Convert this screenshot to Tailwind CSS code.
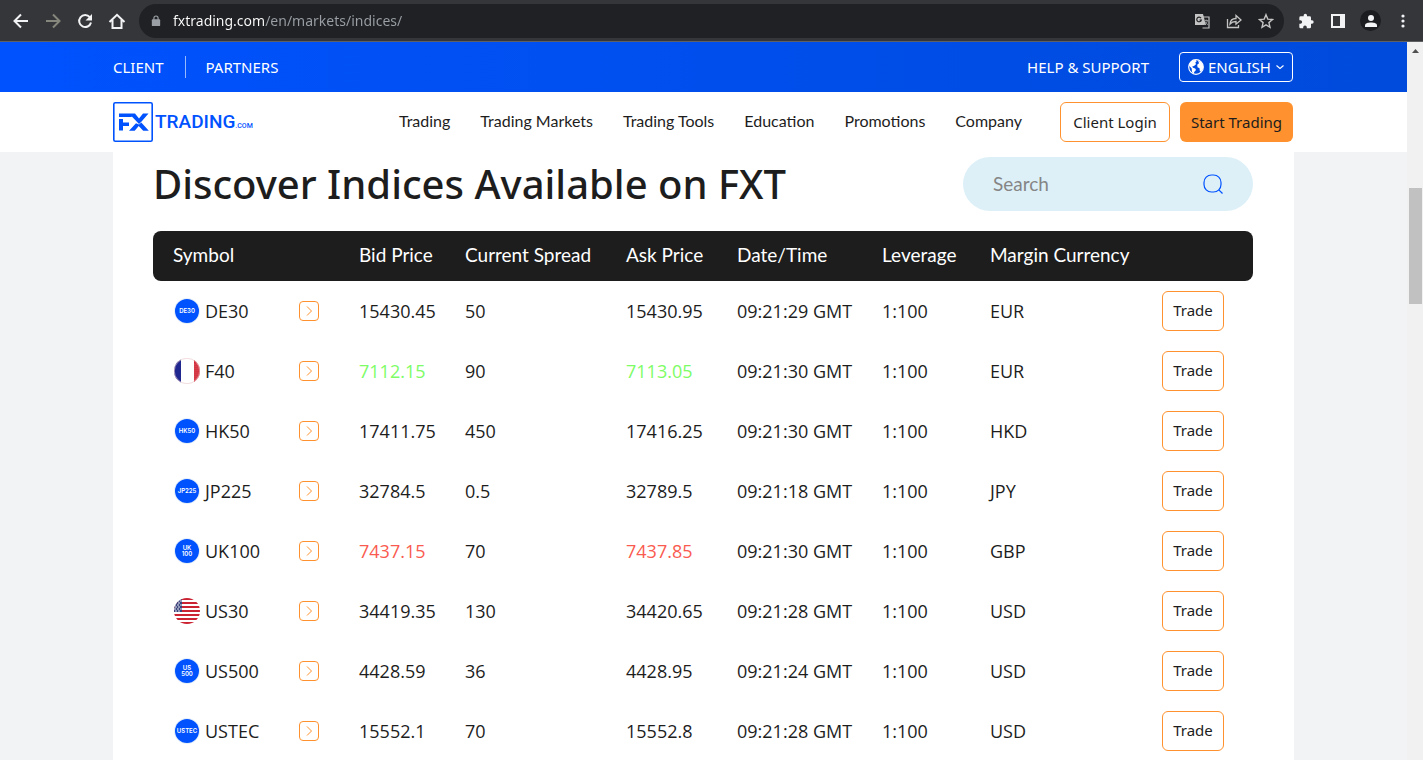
<!DOCTYPE html>
<html lang="en">
<head>
<meta charset="utf-8">
<meta name="viewport" content="width=device-width, initial-scale=1">
<title>Indices | FXTRADING.com</title>
<script src="https://cdn.jsdelivr.net/npm/@tailwindcss/browser@4"></script>
</head>
<body class="flex h-screen flex-col overflow-hidden bg-white font-['Lato',sans-serif] text-[#1d1d1d]">

<!-- Browser toolbar -->
<div class="flex h-[42px] shrink-0 items-center border-b border-[#5f6063] bg-[#35363a] pr-3 pl-[11px] text-[#f1f3f4]">
  <div class="flex items-center gap-3">
    <button aria-label="Back" class="size-5"><svg viewBox="0 0 20 20" fill="none" stroke="currentColor" stroke-width="2" class="size-5"><path d="M17 10H4M10 3.500 3.500 10l6.500 6.500"/></svg></button>
    <button aria-label="Forward" class="size-5 text-[#86877c]"><svg viewBox="0 0 20 20" fill="none" stroke="currentColor" stroke-width="2" class="size-5"><path d="M3 10h13M10 3.500 16.500 10 10 16.500"/></svg></button>
    <button aria-label="Reload" class="size-5"><svg viewBox="0 0 20 20" fill="none" stroke="currentColor" stroke-width="2" class="size-5"><path d="M14.800 6.200A6 6 0 1 0 16 11.500"/><path d="M17 3v6.500h-6.500z" fill="currentColor" stroke="none"/></svg></button>
    <button aria-label="Home" class="size-5"><svg viewBox="0 0 20 20" fill="none" stroke="currentColor" stroke-width="2" class="size-5"><path d="M2.500 11 10 3.800 17.500 11M5.500 9v8h9V9"/></svg></button>
  </div>
  <div class="ml-3 flex h-[34px] flex-1 items-center rounded-full bg-[#202124] pr-[10px] pl-3">
    <svg viewBox="0 0 12 14" class="h-3 w-[10px] text-[#9aa0a6]"><rect x="1" y="5" width="10" height="8" rx="1" fill="currentColor"/><path d="M3.500 6V3.500a2.500 2.500 0 0 1 5 0V6" fill="none" stroke="currentColor" stroke-width="1.400"/></svg>
    <input aria-label="Address" value="fxtrading.com/en/markets/indices/" class="ml-3 min-w-0 flex-1 bg-[linear-gradient(90deg,#fff_92px,#9aa0a6_92px)] bg-clip-text font-['Noto_Sans',sans-serif] text-sm text-transparent outline-none">
    <div class="flex items-center gap-4 text-[#c4c4c4]">
      <button aria-label="Translate" class="size-4"><svg viewBox="0 0 16 16" class="size-4"><path d="M1 1h8l3 11H1z" fill="currentColor"/><path d="M8 4h7v11H8.500" fill="none" stroke="currentColor" stroke-width="1.200"/><path d="M7 5.200A2.300 2.300 0 1 0 7.300 7H5.500" fill="none" stroke="#202124" stroke-width="1.200"/><path d="M10 7.500h4.500M12.200 6.500v1M13.500 7.500c-.5 2-1.500 3-3 4M11 8.500c.6 1.500 1.600 2.500 3 3.200" fill="none" stroke="#8f9092" stroke-width="1"/></svg></button>
      <button aria-label="Share" class="size-4"><svg viewBox="0 0 16 16" fill="none" stroke="currentColor" stroke-width="1.300" class="size-4"><path d="M1.500 6v8.500h11V12"/><path d="M4 11c.3-3.700 2.500-5.500 6-5.500V2.500L15 7l-5 4.200V8.500C7.500 8.500 5.500 9.200 4 11z"/></svg></button>
      <button aria-label="Bookmark" class="size-4"><svg viewBox="0 0 16 16" fill="none" stroke="currentColor" stroke-width="1.400" class="size-4"><path d="m8 1.700 1.800 4.400 4.700.4-3.600 3.100 1.100 4.700L8 11.800l-4 2.500 1.100-4.700L1.500 6.500l4.700-.4z"/></svg></button>
    </div>
  </div>
  <div class="ml-[14px] flex items-center gap-4">
    <button aria-label="Extensions" class="size-4"><svg viewBox="0 0 24 24" class="size-4" fill="currentColor"><path d="M21 11h-1.500V7a2 2 0 0 0-2-2h-4V3.500a2.500 2.500 0 0 0-5 0V5H4a2 2 0 0 0-2 2v3.800h1.500a2.700 2.700 0 0 1 0 5.400H2V21a2 2 0 0 0 2 2h3.800v-1.500a2.700 2.700 0 0 1 5.400 0V23h4.300a2 2 0 0 0 2-2v-5H21a2.500 2.500 0 0 0 0-5z"/></svg></button>
    <button aria-label="Side panel" class="size-4"><svg viewBox="0 0 16 16" class="size-4"><path fill="currentColor" fill-rule="evenodd" d="M1 1h14v14H1zM3 3v10h7V3z"/></svg></button>
    <button aria-label="Profile" class="-mx-[2px] grid size-[21px] place-items-center rounded-full bg-[#1b1c1f]"><svg viewBox="0 0 14 14" class="size-[14px]" fill="currentColor"><circle cx="7" cy="4" r="3"/><path d="M1 13v-1.500C1 9.300 4 8.500 7 8.500s6 .8 6 3V13z"/></svg></button>
    <button aria-label="Menu" class="size-4"><svg viewBox="0 0 16 16" class="size-4" fill="currentColor"><circle cx="8" cy="3" r="1.600"/><circle cx="8" cy="8" r="1.600"/><circle cx="8" cy="13" r="1.600"/></svg></button>
  </div>
</div>

<div class="flex min-h-0 flex-1">
  <div class="flex min-w-0 flex-1 flex-col overflow-hidden bg-[#f2f3f5]">

    <!-- Utility bar -->
    <div class="shrink-0 bg-linear-to-r from-[#0052ff] to-[#004bdb]">
      <div class="mx-auto flex h-[50px] max-w-[1181px] items-center pr-px font-['Noto_Sans',sans-serif] text-[15px] text-white">
        <a href="#">CLIENT</a>
        <a href="#" class="ml-[21px] border-l border-white/60 pl-5">PARTNERS</a>
        <a href="#" class="mr-[30px] ml-auto">HELP &amp; SUPPORT</a>
        <label class="flex h-[30px] items-center gap-1 rounded-[4px] border border-white px-2">
          <svg viewBox="0 0 16 16" class="size-4"><circle cx="8" cy="8" r="7.300" fill="none" stroke="#fff" stroke-width="1.200"/><path fill="#fff" d="M1 6.500C2 3 4.500 1 7.500.8l1.200 1.400-1.500 1.500 1 1.300-2.200 2-1.800.5.800 1.200 2.200.8.800 1.500-1.800 2-.4 2L4 13l-.3-3.500zM10 1.500l3.500 2 1.700 3.500-.2 2.800-2 3-1.200-.8-.3-2.800-2-1-.3-2.400L11 4.200z"/></svg>
          <select aria-label="Language" class="appearance-none bg-transparent"><option>ENGLISH</option></select>
          <svg viewBox="0 0 8 8" class="ml-px size-2" fill="none" stroke="#fff" stroke-width="1.100"><path d="m.5 2.500 3.500 3 3.500-3"/></svg>
        </label>
      </div>
    </div>

    <!-- Main navigation -->
    <header class="shrink-0 bg-white">
      <div class="mx-auto flex h-[60px] max-w-[1181px] items-center pr-px">
        <a href="#" aria-label="FXTRADING.com" class="flex items-center gap-[2px] text-[#0052ff]">
          <svg viewBox="0 0 40 40" class="size-10"><rect x=".8" y=".8" width="38.400" height="38.400" rx="1.500" fill="none" stroke="currentColor" stroke-width="1.600"/><path fill="currentColor" d="M6 11.500h10.500L19 15H6zM6 17v11.500h4v-4.500h6v-3.500h-6V17zM16 11.500h6l4 5 4-5h5.500L28.800 19.200 26 22 16 11.500zM26 22.500l2.300-2 7.500 8.200h-5.600L25.700 24l-4 4.700H16l7-7.500z"/></svg>
          <span class="flex items-baseline"><span class="font-['Roboto',sans-serif] text-[19px] font-medium">TRADING</span><span class="font-['Roboto',sans-serif] text-[7px] font-medium">.COM</span></span>
        </a>
        <nav class="mr-[38px] ml-auto flex gap-[30px] pb-[3px] text-base">
          <a href="#">Trading</a><a href="#">Trading Markets</a><a href="#">Trading Tools</a><a href="#">Education</a><a href="#">Promotions</a><a href="#">Company</a>
        </nav>
        <button class="h-10 w-[110px] rounded-md border border-[#ff922e] font-['Noto_Sans',sans-serif] text-[15px]">Client Login</button>
        <button class="ml-[10px] h-10 w-[113px] rounded-md bg-[#ff922e] font-['Noto_Sans',sans-serif] text-[15px]">Start Trading</button>
      </div>
    </header>

    <!-- Instruments -->
    <main class="mx-auto w-full max-w-[1181px] flex-1 bg-white pt-[5px] pr-[41px] pl-10">
      <div class="flex h-[54px] items-center justify-between">
        <h1 class="font-['Noto_Sans',sans-serif] text-[40px] leading-none font-medium">Discover Indices Available on FXT</h1>
        <div class="flex h-full w-[290px] items-center rounded-full bg-[#ddf0f8] px-[30px]">
          <input type="search" aria-label="Search instruments" placeholder="Search" class="min-w-0 flex-1 bg-transparent text-[19px] outline-none placeholder:text-[#858585]">
          <button aria-label="Search"><svg viewBox="0 0 20 20" class="size-5" fill="none" stroke="#0052ff" stroke-width="1.200"><rect x="1" y="1" width="17" height="17" rx="7.500"/><path d="m15.800 15.800 3.700 3.700"/></svg></button>
        </div>
      </div>
      <table class="mt-5 w-full table-fixed text-left">
        <colgroup><col class="w-[186px]"><col class="w-[106px]"><col class="w-[161px]"><col class="w-[111px]"><col class="w-[145px]"><col class="w-[108px]"><col class="w-[172px]"><col class="w-[111px]"></colgroup>
        <thead>
          <tr class="h-[50px] bg-[#1d1d1d] text-[19px] whitespace-nowrap text-white *:pb-[2px] *:pl-5 *:font-normal">
            <th class="rounded-l-lg">Symbol</th><th>Bid Price</th><th>Current Spread</th><th>Ask Price</th><th>Date/Time</th><th>Leverage</th><th>Margin Currency</th><th class="rounded-r-lg" aria-label="Action"></th>
          </tr>
        </thead>
        <tbody id="rows" class="font-['Open_Sans',sans-serif] text-lg whitespace-nowrap"></tbody>
      </table>
    </main>
  </div>

  <!-- Page scrollbar -->
  <div class="flex w-4 shrink-0 flex-col items-center bg-[#f1f1f1] pt-[7px]" aria-hidden="true">
    <svg viewBox="0 0 7 4" class="h-1 w-[7px]"><path d="M3.500 0 7 4H0z" fill="#505050"/></svg>
    <div class="mt-[135px] h-[116px] w-[13px] bg-[#c1c1c1]"></div>
  </div>
</div>

<script>
const data = [
  ['DE30', '15430.45', '50', '15430.95', '09:21:29', '', 'EUR'],
  ['F40', '7112.15', '90', '7113.05', '09:21:30', 'text-[#7dfc66]', 'EUR'],
  ['HK50', '17411.75', '450', '17416.25', '09:21:30', '', 'HKD'],
  ['JP225', '32784.5', '0.5', '32789.5', '09:21:18', '', 'JPY'],
  ['UK100', '7437.15', '70', '7437.85', '09:21:30', 'text-[#fa5b50]', 'GBP'],
  ['US30', '34419.35', '130', '34420.65', '09:21:28', '', 'USD'],
  ['US500', '4428.59', '36', '4428.95', '09:21:24', '', 'USD'],
  ['USTEC', '15552.1', '70', '15552.8', '09:21:28', '', 'USD'],
];

function flagFrance() {
  let dots = '';
  for (let y = 6; y < 23; y += 2) for (let x = 21; x < 26; x += 2) dots += `<circle cx="${x}" cy="${y}" r=".5" fill="#fff" opacity=".6"/>`;
  return `<path fill="#20288f" d="M7 1.500v23a13 13 0 0 1 0-23z"/><path fill="#d02030" d="M20 2v22a13 13 0 0 0 0-22z"/>${dots}<circle cx="13" cy="13" r="12.700" fill="none" stroke="#e9c4c8" stroke-width=".6"/>`;
}
function flagUsa() {
  let s = '<clipPath id="us"><circle cx="13" cy="13" r="13"/></clipPath><g clip-path="url(#us)"><path fill="#fff" d="M0 0h26v26H0z"/>';
  for (let y = 0; y < 26; y += 4) s += `<path fill="#cc2333" d="M0 ${y}h26v2H0z"/>`;
  s += '<path fill="#39447c" d="M0 0h8v14H0z"/>';
  for (let y = 1; y < 14; y += 2) for (let x = 1 + (y % 4 === 1 ? 1 : 0); x < 8; x += 3) s += `<circle cx="${x}" cy="${y}" r=".8" fill="#fff"/>`;
  return s + '</g>';
}
function badge(name) {
  const text = (t, y) => `<text x="13" y="${y}" font-size="6" text-anchor="middle">${t}</text>`;
  const stacked = name === 'UK100' || name === 'US500';
  return `<circle cx="13" cy="13" r="13" fill="#e6eff8"/><circle cx="13" cy="13" r="12" fill="#0052ff"/><g fill="#fff" font-family="Inter, sans-serif" font-weight="600">${
    stacked ? text(name.slice(0, 2), 12) + text(name.slice(2), 18) : text(name, 15)}</g>`;
}
const icon = n => n === 'F40' ? flagFrance() : n === 'US30' ? flagUsa() : badge(n);

document.getElementById('rows').innerHTML = data.map(([name, bid, spread, ask, time, tone, currency]) => `
  <tr class="h-[60px] *:pl-5">
    <td class="pr-5"><div class="flex items-center"><svg viewBox="0 0 26 26" class="ml-px size-[26px]">${icon(name)}</svg><span class="ml-[5px]">${name}</span>
      <button aria-label="Details of ${name}" class="ml-auto grid size-5 place-items-center rounded-[4px] border border-[#ff922e]"><svg viewBox="0 0 10 10" class="size-[10px]" fill="none" stroke="#ff922e"><path d="m3 .5 4.500 4.500L3 9.500"/></svg></button></div></td>
    <td class="${tone}">${bid}</td><td>${spread}</td><td class="${tone}">${ask}</td><td>${time} GMT</td><td>1:100</td><td>${currency}</td>
    <td><button class="block h-10 w-[62px] rounded-md border border-[#ff922e] font-['Noto_Sans',sans-serif] text-[15px]">Trade</button></td>
  </tr>`).join('');
</script>
</body>
</html>
